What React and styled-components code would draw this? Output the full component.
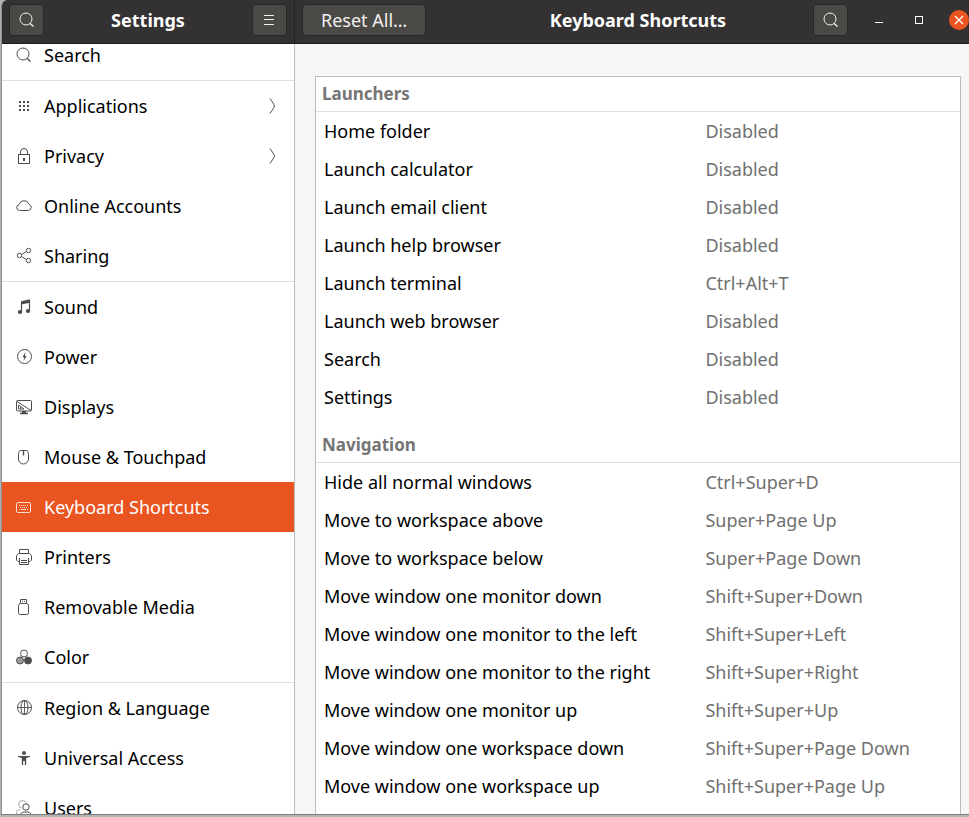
import React from "react";
import styled, { createGlobalStyle } from "styled-components";

const GlobalStyle = createGlobalStyle`
  * { box-sizing: border-box; }
  body {
    margin: 0;
    background: #b3b3b3;
    font-family: "Noto Sans", "Open Sans", sans-serif;
    font-size: 18px;
    line-height: 24px;
    color: #000;
  }
  button { font: inherit; }
`;

const Window = styled.div`
  display: flex;
  flex-direction: column;
  height: calc(100vh - 2px);
  margin-left: 1px;
  border-left: 1px solid #8c8c8c;
  border-bottom: 1px solid #7e7e7e;
  border-top-left-radius: 6px;
  overflow: hidden;
  background: #f6f6f6;
`;

const HeaderBar = styled.header`
  display: flex;
  flex: none;
  height: 44px;
  background: #333132;
  border-bottom: 1px solid #1f1d1e;
`;

const SidebarHeader = styled.div`
  display: flex;
  flex: none;
  align-items: flex-start;
  justify-content: space-between;
  width: 293px;
  padding: 4px 7px 0;
  border-right: 1px solid #242223;
`;

const MainHeader = styled.div`
  display: grid;
  flex: 1;
  grid-template-columns: 1fr auto 1fr;
  align-items: start;
  padding: 4px 0 0 7px;
  margin-right: -5px;
`;

const Title = styled.h1`
  margin: 0;
  font-size: 18px;
  line-height: 32px;
  font-weight: 700;
  color: #fff;
  white-space: nowrap;
`;

const HeaderButton = styled.button`
  display: flex;
  align-items: center;
  justify-content: center;
  justify-self: start;
  width: ${(p) => (p.$wide ? "auto" : "35px")};
  height: 32px;
  padding: ${(p) => (p.$wide ? "0 18px" : "0")};
  border: 1px solid #2a2829;
  border-radius: 4px;
  background: #4a4946;
  color: #f2f1ef;
`;

const WindowControls = styled.div`
  display: flex;
  justify-content: flex-end;
  align-items: center;
  gap: 10px;
`;

const SearchSlot = styled.div`
  margin-right: 6px;
`;

const ControlButton = styled.button`
  display: flex;
  align-items: center;
  justify-content: center;
  width: 30px;
  height: 32px;
  padding: 0;
  border: 0;
  background: none;
  color: #fff;
`;

const Body = styled.div`
  display: flex;
  flex: 1;
  min-height: 0;
`;

const Sidebar = styled.nav`
  flex: none;
  width: 293px;
  overflow: hidden;
  background: #fff;
  border-right: 1px solid #bdbdbd;
`;

/* The list is shown part-way scrolled, so its first row is cut by the header. */
const NavList = styled.ul`
  margin: -14px 0 0;
  padding: 0;
  list-style: none;
`;

const NavItem = styled.li`
  border-bottom: ${(p) => (p.$divided ? "1px solid #dedede" : "0")};
`;

const NavLink = styled.a`
  display: flex;
  align-items: center;
  gap: 12px;
  height: 50px;
  padding: 0 16px 0 14px;
  text-decoration: none;
  color: ${(p) => (p.$active ? "#fff" : "#000")};
  background: ${(p) => (p.$active ? "#e95420" : "transparent")};

  svg { color: ${(p) => (p.$active ? "#fbdcd0" : "#4d4d4d")}; }
`;

const NavLabel = styled.span`
  flex: 1;
  white-space: nowrap;
`;

const Content = styled.main`
  flex: 1;
  min-width: 0;
  overflow: hidden;
  padding: 32px 8px 0 20px;
`;

const Panel = styled.div`
  min-height: 100%;
  background: #fff;
  border: 1px solid #bdbdbd;
  border-bottom: 0;
`;

const ShortcutTable = styled.table`
  width: 100%;
  table-layout: fixed;
  border-collapse: separate;
  border-spacing: 0;
`;

const NameColumn = styled.col`
  width: 60%;
`;

const GroupHeading = styled.th`
  height: ${(p) => (p.$first ? "35px" : "47px")};
  padding: ${(p) => (p.$first ? "0 6px" : "12px 6px 0")};
  border-bottom: 1px solid #dedede;
  font-size: 17px;
  font-weight: 700;
  text-align: left;
  color: #757575;
`;

const NameCell = styled.th`
  height: 38px;
  padding: 0 8px;
  font-weight: 400;
  text-align: left;
  white-space: nowrap;
`;

const KeysCell = styled.td`
  height: 38px;
  padding: 0 3px;
  color: #707070;
  white-space: nowrap;
`;

const Svg = styled.svg`
  display: block;
  flex: none;
  overflow: visible;
`;

const Icon = ({ children }) => (
  <Svg width="16" height="16" viewBox="0 0 16 16" fill="none" stroke="currentColor" aria-hidden="true">
    {children}
  </Svg>
);

const SearchIcon = () => (
  <Icon>
    <circle cx="7" cy="7" r="6" />
    <path d="M11 11.5L14.5 14.5" strokeWidth="1.4" />
  </Icon>
);

const MenuIcon = () => (
  <Icon>
    <path d="M3 3.5h10M3 7.5h10M3 12.5h10" />
  </Icon>
);

const ChevronIcon = () => (
  <Icon>
    <path d="M8 .5L12 6.500Q12.800 8 12 9.500L8 15.500" />
  </Icon>
);

const icons = {
  search: <SearchIcon />,
  apps: (
    <Icon>
      <path d="M3 4h2M7 4h2M11 4h2M3 8h2M7 8h2M11 8h2M3 12h2M7 12h2M11 12h2" strokeWidth="2" />
    </Icon>
  ),
  lock: (
    <Icon>
      <rect x="2.5" y="6.5" width="11" height="9" />
      <path d="M4.5 6.5V4a3.5 3.500 0 0 1 7 0v2.500" />
      <path d="M8 10v3" strokeWidth="2" />
    </Icon>
  ),
  cloud: (
    <Icon>
      <path d="M3.500 12.500A3 3 0 0 1 3 6.600A5.200 5.200 0 0 1 13 6.300A3.200 3.200 0 0 1 12.500 12.500Z" />
    </Icon>
  ),
  share: (
    <Icon>
      <circle cx="3.500" cy="7.500" r="2.200" />
      <circle cx="12.500" cy="2.500" r="2.200" />
      <circle cx="12.500" cy="12.500" r="2.200" />
      <path d="M5.500 6.500L10.500 3.600M5.500 8.600L10.500 11.500" />
    </Icon>
  ),
  music: (
    <Icon>
      <path d="M5 2.200L14 .200V3.800L5 5.500Z" fill="currentColor" stroke="none" />
      <path d="M5.500 3.500v9.500M13.500 2v9.500" strokeWidth="1.200" />
      <ellipse cx="4" cy="13" rx="2.200" ry="2" fill="currentColor" stroke="none" />
      <ellipse cx="12" cy="12" rx="2.200" ry="2" fill="currentColor" stroke="none" />
    </Icon>
  ),
  power: (
    <Icon>
      <circle cx="8.500" cy="7.500" r="7" />
      <path d="M9.500 3L6.500 8.200h1.700L7.600 12L10.600 7H9Z" fill="currentColor" stroke="none" />
    </Icon>
  ),
  display: (
    <Icon>
      <rect x=".500" y="1.500" width="15" height="10.500" rx="1" />
      <path d="M1 2.500L15 11.500" />
      <path d="M2.500 6v4H8ZM4.500 8v2" strokeWidth=".900" />
      <path d="M8 12v2" strokeWidth="4" />
      <path d="M4 14.500h8" strokeWidth="1.500" />
    </Icon>
  ),
  mouse: (
    <Icon>
      <path d="M2.500 5.500C2.500 2.500 3.500 1.500 5 1.500H10C11.500 1.500 12.500 2.500 12.500 5.500V10A5 5 0 0 1 2.500 10Z" />
      <path d="M7.500 1.500v5" strokeWidth="1.400" />
    </Icon>
  ),
  keyboard: (
    <Icon>
      <rect x=".500" y="3.500" width="14" height="10" rx="1.500" />
      <path d="M3 6.500h9" strokeDasharray="1 1" />
      <path d="M4 8.500h8" strokeDasharray="1 1" />
      <path d="M3 10.500h1M5 10.500h5M11 10.500h1" />
    </Icon>
  ),
  printer: (
    <Icon>
      <path d="M3.500 4.500V.500h9v4" />
      <path d="M3 12.500H2L.500 11V6.500L2.500 4.500h11l2 2V11L14 12.500h-1" />
      <path d="M3.500 9v6.500h9V9M5 11.500h6M5 13.500h6" />
    </Icon>
  ),
  usb: (
    <Icon>
      <path d="M4.500 4V.500h6V4" />
      <path d="M6 2.500h1M8 2.500h1" />
      <rect x="2.500" y="4.500" width="10" height="11" rx="2" />
    </Icon>
  ),
  color: (
    <Icon>
      <circle cx="8" cy="4.500" r="3.500" />
      <circle cx="4" cy="11.500" r="3.500" fill="#9a9a9a" />
      <circle cx="12" cy="11.500" r="3.500" fill="currentColor" />
    </Icon>
  ),
  globe: (
    <Icon>
      <circle cx="8.500" cy="7.500" r="7" />
      <ellipse cx="8.500" cy="7.500" rx="3.500" ry="7" />
      <path d="M8.500 .500v14M1.500 7.500h14" strokeWidth=".900" />
    </Icon>
  ),
  access: (
    <Icon>
      <circle cx="8" cy="3" r="2" fill="currentColor" stroke="none" />
      <path d="M2 6H14V7L10.200 8V15H8.800V11H7.200V15H5.800V8L2 7Z" fill="currentColor" stroke="none" />
    </Icon>
  ),
  users: (
    <Icon>
      <g opacity=".5">
        <path d="M5.500 8A4 3.800 0 1 1 10.500 3.500" />
        <path d="M.500 14C.500 10.500 2 10 4.500 9.500" />
      </g>
      <circle cx="10" cy="7" r="3.200" />
      <path d="M4.500 15.500C4.500 12.500 6 12.500 8 12H12C14 12.500 15 13 15 15.500" />
    </Icon>
  ),
};

const navItems = [
  { icon: "search", label: "Search", divided: true },
  { icon: "apps", label: "Applications", more: true },
  { icon: "lock", label: "Privacy", more: true },
  { icon: "cloud", label: "Online Accounts" },
  { icon: "share", label: "Sharing", divided: true },
  { icon: "music", label: "Sound" },
  { icon: "power", label: "Power" },
  { icon: "display", label: "Displays" },
  { icon: "mouse", label: "Mouse & Touchpad" },
  { icon: "keyboard", label: "Keyboard Shortcuts", active: true },
  { icon: "printer", label: "Printers" },
  { icon: "usb", label: "Removable Media" },
  { icon: "color", label: "Color", divided: true },
  { icon: "globe", label: "Region & Language" },
  { icon: "access", label: "Universal Access" },
  { icon: "users", label: "Users" },
];

const groups = [
  {
    name: "Launchers",
    rows: [
      ["Home folder", "Disabled"],
      ["Launch calculator", "Disabled"],
      ["Launch email client", "Disabled"],
      ["Launch help browser", "Disabled"],
      ["Launch terminal", "Ctrl+Alt+T"],
      ["Launch web browser", "Disabled"],
      ["Search", "Disabled"],
      ["Settings", "Disabled"],
    ],
  },
  {
    name: "Navigation",
    rows: [
      ["Hide all normal windows", "Ctrl+Super+D"],
      ["Move to workspace above", "Super+Page Up"],
      ["Move to workspace below", "Super+Page Down"],
      ["Move window one monitor down", "Shift+Super+Down"],
      ["Move window one monitor to the left", "Shift+Super+Left"],
      ["Move window one monitor to the right", "Shift+Super+Right"],
      ["Move window one monitor up", "Shift+Super+Up"],
      ["Move window one workspace down", "Shift+Super+Page Down"],
      ["Move window one workspace up", "Shift+Super+Page Up"],
    ],
  },
];

export default function App() {
  return (
    <>
      <GlobalStyle />
      <Window>
        <HeaderBar>
          <SidebarHeader>
            <HeaderButton aria-label="Search settings"><SearchIcon /></HeaderButton>
            <Title>Settings</Title>
            <HeaderButton aria-label="Menu"><MenuIcon /></HeaderButton>
          </SidebarHeader>
          <MainHeader>
            <HeaderButton $wide>Reset All…</HeaderButton>
            <Title as="h2">Keyboard Shortcuts</Title>
            <WindowControls>
              <SearchSlot>
                <HeaderButton aria-label="Search shortcuts"><SearchIcon /></HeaderButton>
              </SearchSlot>
              <ControlButton aria-label="Minimize">
                <Icon><path d="M4 10.500h8" /></Icon>
              </ControlButton>
              <ControlButton aria-label="Maximize">
                <Icon><rect x="4.500" y="4.500" width="7" height="7" /></Icon>
              </ControlButton>
              <ControlButton aria-label="Close">
                <Icon>
                  <circle cx="8" cy="8" r="10" fill="#e95420" stroke="none" />
                  <path d="M4 4l8 8M12 4l-8 8" strokeWidth="1.300" />
                </Icon>
              </ControlButton>
            </WindowControls>
          </MainHeader>
        </HeaderBar>
        <Body>
          <Sidebar aria-label="Settings sections">
            <NavList>
              {navItems.map((item) => (
                <NavItem key={item.label} $divided={item.divided}>
                  <NavLink
                    href="#"
                    $active={item.active}
                    aria-current={item.active ? "page" : undefined}
                  >
                    {icons[item.icon]}
                    <NavLabel>{item.label}</NavLabel>
                    {item.more && <ChevronIcon />}
                  </NavLink>
                </NavItem>
              ))}
            </NavList>
          </Sidebar>
          <Content>
            <Panel>
              <ShortcutTable>
                <colgroup>
                  <NameColumn />
                  <col />
                </colgroup>
                {groups.map((group, index) => (
                  <tbody key={group.name}>
                    <tr>
                      <GroupHeading colSpan={2} scope="rowgroup" $first={index === 0}>
                        {group.name}
                      </GroupHeading>
                    </tr>
                    {group.rows.map(([name, keys]) => (
                      <tr key={name}>
                        <NameCell scope="row">{name}</NameCell>
                        <KeysCell>{keys}</KeysCell>
                      </tr>
                    ))}
                  </tbody>
                ))}
              </ShortcutTable>
            </Panel>
          </Content>
        </Body>
      </Window>
    </>
  );
}
